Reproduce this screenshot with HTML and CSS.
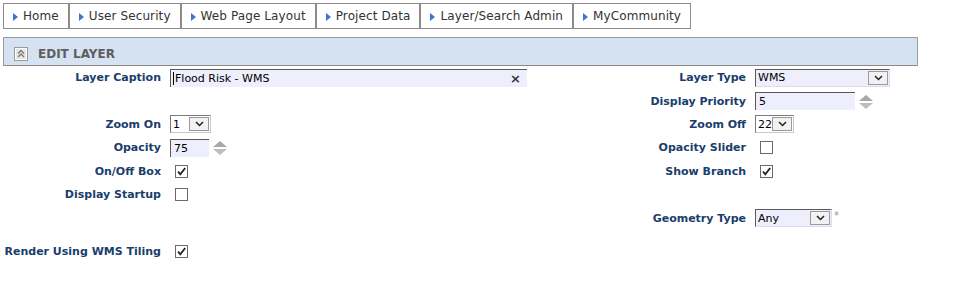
FILE: index.html
```html
<!DOCTYPE html>
<html lang="en">
<head>
  <meta charset="UTF-8">
  <title>Edit Layer</title>
  <link rel="stylesheet" href="styles.css">
</head>
<body>
  <!-- Top menu -->
  <div class="tabs">
    <a class="tab"><i class="tri"></i>Home</a>
    <a class="tab"><i class="tri"></i>User Security</a>
    <a class="tab"><i class="tri"></i>Web Page Layout</a>
    <a class="tab"><i class="tri"></i>Project Data</a>
    <a class="tab"><i class="tri"></i>Layer/Search Admin</a>
    <a class="tab"><i class="tri"></i>MyCommunity</a>
  </div>

  <div class="panel-head">
    <svg class="collapse" width="14" height="14" viewBox="0 0 14 14">
      <rect x="0.5" y="0.5" width="13" height="13" fill="#e6e6e6" stroke="#9a9a9a"/>
      <rect x="1.5" y="1.5" width="11" height="11" fill="none" stroke="#fff"/>
      <path d="M4 6.5 L7 3.5 L10 6.5 M4 10 L7 7 L10 10" fill="none" stroke="#7a7a7a" stroke-width="1.4"/>
    </svg>
    <span>EDIT LAYER</span>
  </div>

  <div class="form">
    <!-- row 1 -->
    <label>Layer Caption</label>
    <div class="field">
      <div class="txt wide"><span class="caret"></span>Flood Risk - WMS<span class="clear">×</span></div>
    </div>
    <label>Layer Type</label>
    <div class="field">
      <div class="sel lav w135"><span class="val">WMS</span><span class="arrow"></span></div>
    </div>

    <!-- row 2 -->
    <label></label>
    <div class="field"></div>
    <label>Display Priority</label>
    <div class="field">
      <div class="txt w100">5</div><span class="spin"></span>
    </div>

    <!-- row 3 -->
    <label>Zoom On</label>
    <div class="field">
      <div class="sel w41"><span class="val">1</span><span class="arrow"></span></div>
    </div>
    <label>Zoom Off</label>
    <div class="field">
      <div class="sel w39"><span class="val">22</span><span class="arrow"></span></div>
    </div>

    <!-- row 4 -->
    <label>Opacity</label>
    <div class="field">
      <div class="txt w39">75</div><span class="spin"></span>
    </div>
    <label>Opacity Slider</label>
    <div class="field"><span class="check"></span></div>

    <!-- row 5 -->
    <label>On/Off Box</label>
    <div class="field"><span class="check on"></span></div>
    <label>Show Branch</label>
    <div class="field"><span class="check on"></span></div>

    <!-- row 6 -->
    <label>Display Startup</label>
    <div class="field"><span class="check"></span></div>
    <label></label>
    <div class="field"></div>

    <!-- row 7 -->
    <label></label>
    <div class="field"></div>
    <label>Geometry Type</label>
    <div class="field">
      <div class="sel lav w77"><span class="val">Any</span><span class="arrow"></span></div><span class="req">*</span>
    </div>

    <div class="spacer"></div>

    <!-- row 8 -->
    <label>Render Using WMS Tiling</label>
    <div class="field"><span class="check on"></span></div>
  </div>
</body>
</html>
```

FILE: styles.css
```css
/* Global */
body {
  margin: 0;
  padding: 3px;
  font-family: 'DejaVu Sans', Verdana, sans-serif;
  background: #fff;
  color: #000;
}

/* Tabs */
.tabs {
  display: flex;
  height: 26px;
}
.tab {
  display: flex;
  align-items: center;
  border: 1px solid #8c8c8c;
  padding: 0 9px 0 9px;
  font-size: 12px;
  letter-spacing: 0.1px;
  color: #333;
  background: #fff;
}
.tri {
  width: 0;
  height: 0;
  border-top: 4px solid transparent;
  border-bottom: 4px solid transparent;
  border-left: 5px solid #3f73d6;
  margin-right: 5px;
  margin-top: 1px;
}

/* Panel header */
.panel-head {
  margin-top: 8px;
  width: 903px;
  height: 24px;
  padding-top: 3px;
  background: #d4e2f2;
  border: 1px solid #9c9c9c;
  border-bottom-color: #8a8a8a;
  display: flex;
  align-items: center;
  padding-left: 10px;
}
.panel-head span {
  margin-left: 10px;
  font-size: 12px;
  font-weight: bold;
  color: #5e5e5e;
  margin-top: 1px;
}
.collapse {
  margin-top: 1px;
}

/* Form grid */
.form {
  display: grid;
  grid-template-columns: 167px 470px 115px 1fr;
  grid-template-rows: repeat(7, 23.4px) 10.4px 23.4px;
  width: 915px;
}
.form label {
  padding-right: 9px;
  font-size: 11px;
  font-weight: bold;
  color: #1a3d6c;
  display: flex;
  align-items: center;
  justify-content: flex-end;
  white-space: nowrap;
}
.field {
  display: flex;
  align-items: center;
}
.spacer {
  grid-column: 1 / -1;
}

/* Text boxes */
.txt {
  box-sizing: border-box;
  height: 18px;
  background: #eeeefc;
  border-top: 1px solid #5a5a5a;
  border-left: 1px solid #5a5a5a;
  font-size: 11px;
  padding-left: 3px;
  display: flex;
  align-items: center;
}
.wide { width: 357px; }
.w100 { width: 100px; }
.w39 { width: 39px; }
.caret {
  width: 1px;
  height: 13px;
  background: #000;
  margin-left: -1px;
  margin-right: 1px;
}
.clear {
  margin-left: auto;
  margin-right: 6px;
  font-size: 13px;
  font-weight: bold;
  color: #333;
}

/* Spinner arrows */
.spin {
  width: 15px;
  height: 15px;
  margin-left: 4px;
  position: relative;
}
.spin::before,
.spin::after {
  content: '';
  position: absolute;
  left: 0;
  border-left: 7px solid transparent;
  border-right: 7px solid transparent;
}
.spin::before {
  top: 1px;
  border-bottom: 6px solid #a8a8a8;
}
.spin::after {
  bottom: 0;
  border-top: 6px solid #bdbdbd;
}

/* Drop downs */
.sel {
  box-sizing: border-box;
  height: 18px;
  background: #fff;
  border: 1px solid #7a7a7a;
  border-right-color: #c8c8c8;
  border-bottom-color: #c8c8c8;
  display: flex;
  align-items: center;
  font-size: 11px;
  padding-left: 2px;
}
.sel.lav {
  background: #eeeefc;
  border-color: #5a5a5a #dcdcec #dcdcec #5a5a5a;
}
.w135 { width: 135px; }
.w41 { width: 41px; }
.w77 { width: 77px; }
.val { flex: 1; }
.arrow {
  box-sizing: border-box;
  width: 20px;
  height: 14px;
  margin-right: 1px;
  border: 1px solid #9a9a9a;
  background: #f2f2f2 url("data:image/svg+xml;utf8,<svg xmlns='http://www.w3.org/2000/svg' width='9' height='6'><path d='M1 1 L4.5 4.5 L8 1' fill='none' stroke='%23222' stroke-width='1.5'/></svg>") no-repeat center;
}

.req {
  margin-left: 2px;
  margin-top: -6px;
  font-size: 10px;
  color: #999;
}

/* Checkboxes */
.check {
  box-sizing: border-box;
  width: 13px;
  height: 13px;
  margin-left: 5px;
  border: 1px solid #6a6a6a;
  background: #fff;
}
.check.on {
  background: #fff url("data:image/svg+xml;utf8,<svg xmlns='http://www.w3.org/2000/svg' width='11' height='11'><path d='M2 5.5 L4.3 8.3 L9.2 2' fill='none' stroke='%23222' stroke-width='1.8'/></svg>") no-repeat center;
}
```
